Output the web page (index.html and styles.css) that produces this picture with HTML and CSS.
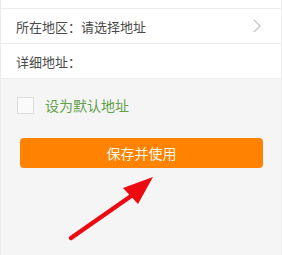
FILE: index.html
```html
<!DOCTYPE html>
<html lang="zh-CN">

<head>
    <meta charset="UTF-8">
    <meta name="viewport" content="width=device-width, initial-scale=1.0">
    <title>收货地址</title>
    <link rel="stylesheet" href="styles.css">
</head>

<body>

    <div class="page">
        <div class="form">
            <div class="row row-top"></div>
            <div class="row">
                <span class="label">所在地区：</span>
                <span class="value">请选择地址</span>
                <svg class="chevron" width="8" height="14" viewBox="0 0 8 14">
                    <path d="M1 1 L7 7 L1 13" fill="none" stroke="#c4c4c4" stroke-width="1.2" />
                </svg>
            </div>
            <div class="row">
                <span class="label">详细地址：</span>
            </div>
        </div>

        <label class="default">
            <span class="box"></span>
            <span class="default-text">设为默认地址</span>
        </label>

        <div class="btn">保存并使用</div>

        <svg class="arrow" width="100" height="75" viewBox="0 0 100 75">
            <line x1="11" y1="68" x2="74" y2="24" stroke="#ec0a10" stroke-width="4.5" stroke-linecap="round" />
            <polygon points="93,7 63,18 78,34" fill="#ec0a10" />
        </svg>
    </div>

</body>

</html>
```

FILE: styles.css
```css
body {
    margin: 0;
    background-color: #f5f5f5;
    font-family: "Noto Sans CJK SC", "Noto Sans", sans-serif;
    color: #4a4a4a;
}

.page {
    position: relative;
    height: 255px;
    overflow: hidden;
    border-left: 1px solid #ececec;
    border-right: 1px solid #ececec;
}

.form {
    background-color: #fff;
}

.row {
    height: 34px;
    display: flex;
    align-items: center;
    padding: 0 15px;
    border-bottom: 1px solid #ececec;
    font-size: 13px;
}

.row-top {
    height: 8px;
}

.value {
    flex: 1;
}

.chevron {
    margin-right: 5px;
}

.default {
    display: flex;
    align-items: center;
    padding: 16px 0 0 16px;
}

.box {
    width: 15px;
    height: 15px;
    border: 1px solid #dcdcdc;
    background-color: #fafafa;
}

.default-text {
    margin-left: 11px;
    font-size: 14px;
    color: #62a04a;
}

.btn {
    margin: 23px 18px 0 19px;
    height: 30px;
    border-radius: 4px;
    background-color: #ff8300;
    color: #fff6ea;
    font-size: 14px;
    display: flex;
    justify-content: center;
    align-items: center;
}

.arrow {
    position: absolute;
    left: 59px;
    top: 170px;
}
```
